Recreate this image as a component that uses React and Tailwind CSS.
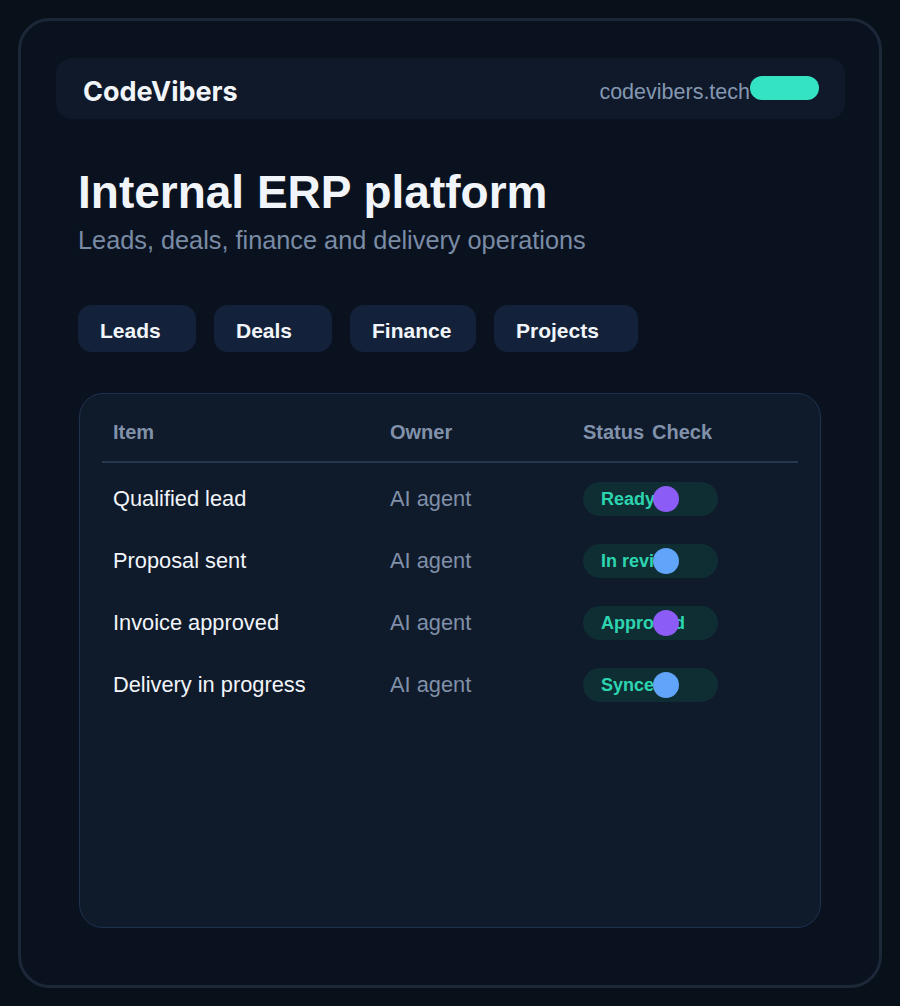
const tabs = [
  { label: "Leads", w: "w-[118px]" },
  { label: "Deals", w: "w-[118px]" },
  { label: "Finance", w: "w-[126px]" },
  { label: "Projects", w: "w-[144px]" },
];

const rows = [
  { item: "Qualified lead", status: "Ready", dot: "bg-[#8b5cf6]" },
  { item: "Proposal sent", status: "In review", dot: "bg-[#60a5fa]" },
  { item: "Invoice approved", status: "Approved", dot: "bg-[#8b5cf6]" },
  { item: "Delivery in progress", status: "Synced", dot: "bg-[#60a5fa]" },
];

const cols = "grid grid-cols-[277px_193px_69px_157px]";

export default function App() {
  return (
    <div
      className="min-h-[1006px] w-[900px] bg-[#08101a] p-[18px]"
      style={{ fontFamily: '"Liberation Sans", Arial, sans-serif' }}
    >
      <div className="h-[970px] rounded-[32px] border-[3px] border-[#1c2738] bg-[#0a1220] pl-[35px] pr-[34px] pt-[37px]">
        {/* Header */}
        <div className="flex h-[61px] items-center justify-between rounded-[16px] bg-[#0f192a] pl-[27px] pr-[26px]">
          <span
            className="pt-[8px] text-[27px] font-bold text-[#f1f5f9]"
            style={{ fontFamily: "Inter, sans-serif" }}
          >
            CodeVibers
          </span>
          <div className="flex items-center">
            <span className="pt-[8px] text-[21.5px] text-[#8497b0]">codevibers.tech</span>
            <span className="mb-[1px] h-[24px] w-[69px] rounded-full bg-[#34e3c1]"></span>
          </div>
        </div>

        <div className="pl-[22px] pr-[24px]">
          {/* Title */}
          <h1 className="mt-[50px] text-[46px] font-bold leading-none text-[#f1f5f9]">
            Internal ERP platform
          </h1>
          <p className="mt-[13px] text-[25.3px] leading-none text-[#7a8ca5]">
            Leads, deals, finance and delivery operations
          </p>

          {/* Tabs */}
          <div className="mt-[52px] flex gap-[18px]">
            {tabs.map((t) => (
              <div
                key={t.label}
                className={`${t.w} flex h-[47px] items-center rounded-[14px] bg-[#13223a] pl-[22px] pt-[3px] text-[21px] font-bold text-[#f1f5f9]`}
              >
                {t.label}
              </div>
            ))}
          </div>

          {/* Table */}
          <div className="ml-[1px] mt-[41px] h-[535px] rounded-[24px] border border-[#1e3250] bg-[#0f1a2b] px-[22px] pt-[22px]">
            <div className={`${cols} border-b-2 border-[#243650] pb-[13px] text-[20px] font-bold leading-[32px] text-[#8191aa]`}>
              <div className="pl-[11px]">Item</div>
              <div className="pl-[11px]">Owner</div>
              <div className="whitespace-nowrap pl-[11px]">Status</div>
              <div className="pl-[11px]">Check</div>
            </div>
            <div className="pt-[5px]">
              {rows.map((r) => (
                <div key={r.item} className={`${cols} h-[62px] items-center text-[21.8px]`}>
                  <div className="pl-[11px] text-[#f1f5f9]">{r.item}</div>
                  <div className="pl-[11px] text-[#8090a8]">AI agent</div>
                  <div className="pl-[11px]">
                    <div className="flex h-[34px] w-[135px] items-center rounded-full bg-[#0f2e33] pl-[18px] text-[18px] font-bold whitespace-nowrap text-[#2dd4b0]">
                      {r.status}
                    </div>
                  </div>
                  <div className="pl-[12px]">
                    <div className={`h-[26px] w-[26px] rounded-full ${r.dot}`}></div>
                  </div>
                </div>
              ))}
            </div>
          </div>
        </div>
      </div>
    </div>
  );
}
